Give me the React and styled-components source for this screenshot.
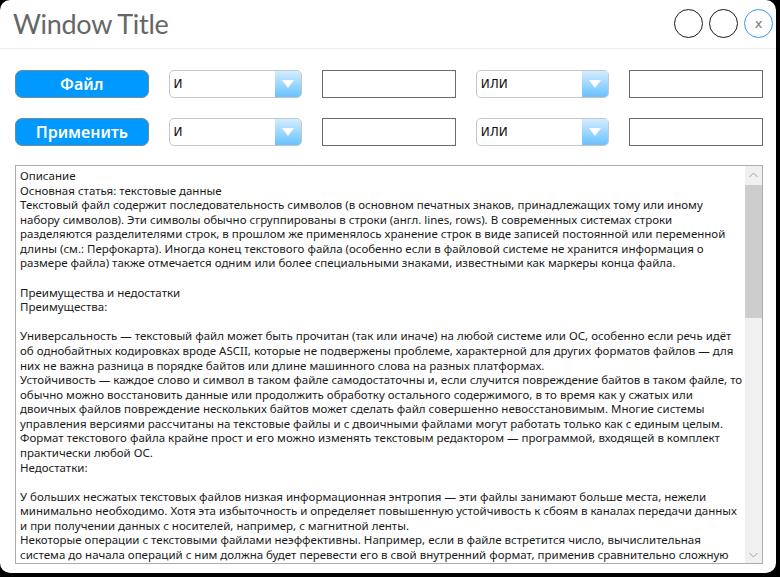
import React from "react";
import styled, { createGlobalStyle } from "styled-components";

const GlobalStyle = createGlobalStyle`
  html, body {
    margin: 0;
    padding: 0;
    background: #000000;
  }
`;

const Window = styled.div`
  width: 776px;
  height: 573px;
  background: #ffffff;
  border-radius: 10px;
  overflow: hidden;
  display: flex;
  flex-direction: column;
`;

const Header = styled.div`
  flex-shrink: 0;
  height: 48px;
  border-bottom: 1px solid #ececec;
  display: flex;
  align-items: center;
  justify-content: space-between;
  padding: 0 3px 0 13px;
`;

const Title = styled.h1`
  margin: 0;
  font-family: Lato, "Open Sans", sans-serif;
  font-weight: 400;
  font-size: 27px;
  color: #666666;
  letter-spacing: -0.3px;
  padding-bottom: 2px;
`;

const Controls = styled.div`
  display: flex;
  gap: 6px;
  padding-bottom: 1px;
`;

const CircleButton = styled.button`
  width: 29px;
  height: 29px;
  border-radius: 50%;
  border: 1px solid ${(p) => (p.close ? "#3399ff" : "#1a1a1a")};
  background: #ffffff;
  padding: 0;
  color: #777777;
  font-family: "DejaVu Sans", sans-serif;
  font-size: 13px;
  line-height: 1;
  display: flex;
  align-items: center;
  justify-content: center;
`;

const Body = styled.div`
  flex: 1;
  min-height: 0;
  display: flex;
  flex-direction: column;
  padding: 21px 13px 9px 15px;
`;

const FilterGrid = styled.div`
  flex-shrink: 0;
  display: grid;
  grid-template-columns: repeat(5, 1fr);
  column-gap: 20px;
  row-gap: 20px;
`;

const ActionButton = styled.button`
  height: 28px;
  border-radius: 7px;
  border: 1px solid #6f8a9c;
  background: #0099ff;
  color: #ffffff;
  font-family: "Noto Sans", sans-serif;
  font-weight: 600;
  font-size: 16px;
  padding: 0;
  display: flex;
  align-items: center;
  justify-content: center;
`;

const Select = styled.div`
  height: 28px;
  box-sizing: border-box;
  border: 1px solid #c6c6c6;
  border-radius: 5px;
  display: flex;
  overflow: hidden;
  background: #ffffff;
`;

const SelectValue = styled.div`
  flex: 1;
  display: flex;
  align-items: center;
  padding-left: 4px;
  font-family: "DejaVu Sans", Verdana, sans-serif;
  font-size: 12px;
  color: #111111;
`;

const SelectArrow = styled.div`
  width: 26px;
  background: linear-gradient(#d4ecff, #66c2ff);
  display: flex;
  align-items: center;
  justify-content: center;
`;

const Input = styled.input`
  height: 28px;
  box-sizing: border-box;
  border: 1px solid #6a6a6a;
  border-radius: 0;
  margin: 0;
  padding: 0 4px;
  min-width: 0;
  width: 100%;
`;

const TextBox = styled.div`
  margin-top: 19px;
  flex: 1;
  min-height: 0;
  border: 1px solid #abadb3;
  display: flex;
  overflow: hidden;
`;

const TextContent = styled.div`
  flex: 1;
  padding: 3px 0 0 4px;
  font-family: "Noto Sans", "Open Sans", sans-serif;
  font-size: 11.5px;
  color: #1a1a1a;
  overflow: hidden;
`;

const TextLine = styled.div`
  height: 14.58px;
  line-height: 14.58px;
  white-space: nowrap;
`;

const ScrollBar = styled.div`
  width: 17px;
  background: #f0f0f0;
  display: flex;
  flex-direction: column;
  align-items: center;
`;

const ScrollArrow = styled.div`
  height: 17px;
  width: 17px;
  display: flex;
  align-items: center;
  justify-content: center;
`;

const ScrollTrack = styled.div`
  flex: 1;
  width: 100%;
  padding: 2px 0;
  box-sizing: border-box;
`;

const ScrollThumb = styled.div`
  height: 133px;
  background: #cdcdcd;
`;

const Triangle = () => (
  <svg width="14" height="10" viewBox="0 0 14 10">
    <path d="M1 1 L13 1 L7 9 Z" fill="#ffffff" />
  </svg>
);

const Chevron = ({ down }) => (
  <svg width="9" height="6" viewBox="0 0 9 6">
    <path
      d={down ? "M0.5 1 L4.5 5 L8.5 1" : "M0.5 5 L4.5 1 L8.5 5"}
      stroke="#a3a3a3"
      strokeWidth="1"
      fill="none"
    />
  </svg>
);

const lines = [
  "Описание",
  "Основная статья: текстовые данные",
  "Текстовый файл содержит последовательность символов (в основном печатных знаков, принадлежащих тому или иному",
  "набору символов). Эти символы обычно сгруппированы в строки (англ. lines, rows). В современных системах строки",
  "разделяются разделителями строк, в прошлом же применялось хранение строк в виде записей постоянной или переменной",
  "длины (см.: Перфокарта). Иногда конец текстового файла (особенно если в файловой системе не хранится информация о",
  "размере файла) также отмечается одним или более специальными знаками, известными как маркеры конца файла.",
  "",
  "Преимущества и недостатки",
  "Преимущества:",
  "",
  "Универсальность — текстовый файл может быть прочитан (так или иначе) на любой системе или ОС, особенно если речь идёт",
  "об однобайтных кодировках вроде ASCII, которые не подвержены проблеме, характерной для других форматов файлов — для",
  "них не важна разница в порядке байтов или длине машинного слова на разных платформах.",
  "Устойчивость — каждое слово и символ в таком файле самодостаточны и, если случится повреждение байтов в таком файле, то",
  "обычно можно восстановить данные или продолжить обработку остального содержимого, в то время как у сжатых или",
  "двоичных файлов повреждение нескольких байтов может сделать файл совершенно невосстановимым. Многие системы",
  "управления версиями рассчитаны на текстовые файлы и с двоичными файлами могут работать только как с единым целым.",
  "Формат текстового файла крайне прост и его можно изменять текстовым редактором — программой, входящей в комплект",
  "практически любой ОС.",
  "Недостатки:",
  "",
  "У больших несжатых текстовых файлов низкая информационная энтропия — эти файлы занимают больше места, нежели",
  "минимально необходимо. Хотя эта избыточность и определяет повышенную устойчивость к сбоям в каналах передачи данных",
  "и при получении данных с носителей, например, с магнитной ленты.",
  "Некоторые операции с текстовыми файлами неэффективны. Например, если в файле встретится число, вычислительная",
  "система до начала операций с ним должна будет перевести его в свой внутренний формат, применив сравнительно сложную",
];

const Dropdown = ({ value }) => (
  <Select>
    <SelectValue>{value}</SelectValue>
    <SelectArrow>
      <Triangle />
    </SelectArrow>
  </Select>
);

const App = () => {
  return (
    <>
      <GlobalStyle />
      <Window>
        <Header>
          <Title>Window Title</Title>
          <Controls>
            <CircleButton />
            <CircleButton />
            <CircleButton close>x</CircleButton>
          </Controls>
        </Header>
        <Body>
          <FilterGrid>
            <ActionButton>Файл</ActionButton>
            <Dropdown value="И" />
            <Input />
            <Dropdown value="ИЛИ" />
            <Input />
            <ActionButton>Применить</ActionButton>
            <Dropdown value="И" />
            <Input />
            <Dropdown value="ИЛИ" />
            <Input />
          </FilterGrid>
          <TextBox>
            <TextContent>
              {lines.map((line, i) => (
                <TextLine key={i}>{line || "\u00a0"}</TextLine>
              ))}
            </TextContent>
            <ScrollBar>
              <ScrollArrow>
                <Chevron />
              </ScrollArrow>
              <ScrollTrack>
                <ScrollThumb />
              </ScrollTrack>
              <ScrollArrow>
                <Chevron down />
              </ScrollArrow>
            </ScrollBar>
          </TextBox>
        </Body>
      </Window>
    </>
  );
};

export default App;
